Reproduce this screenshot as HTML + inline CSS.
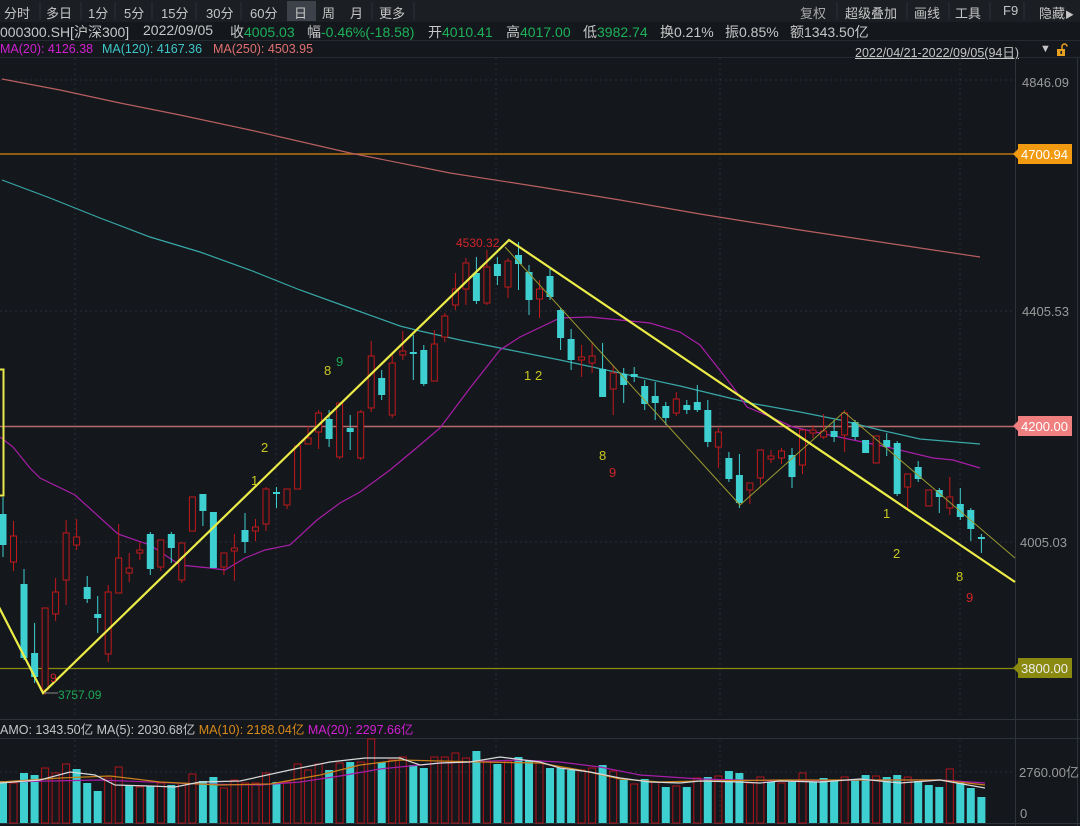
<!DOCTYPE html>
<html><head><meta charset="utf-8"><style>
html,body{margin:0;padding:0;background:#14171c;width:1080px;height:826px;overflow:hidden;font-family:"Liberation Sans","Noto Sans CJK SC",sans-serif;}
.t{position:absolute;white-space:nowrap;}
</style></head><body>
<div style="position:absolute;left:0;top:0;width:1080px;height:22px;background:#1b1e23;"></div>
<div style="position:absolute;left:287px;top:1px;width:29px;height:20px;background:#3d4149;"></div>
<div style="font-size:13px;color:#c6c6c6;">
<span class="t" style="left:4px;top:3px">分时</span>
<span class="t" style="left:46px;top:3px">多日</span>
<span class="t" style="left:88px;top:3px">1分</span>
<span class="t" style="left:124px;top:3px">5分</span>
<span class="t" style="left:161px;top:3px">15分</span>
<span class="t" style="left:206px;top:3px">30分</span>
<span class="t" style="left:250px;top:3px">60分</span>
<span class="t" style="left:294px;top:3px">日</span>
<span class="t" style="left:322px;top:3px">周</span>
<span class="t" style="left:350px;top:3px">月</span>
<span class="t" style="left:379px;top:3px">更多</span>
<span class="t" style="left:800px;top:3px;color:#a8a8a8">复权</span>
<span class="t" style="left:845px;top:3px">超级叠加</span>
<span class="t" style="left:914px;top:3px">画线</span>
<span class="t" style="left:955px;top:3px">工具</span>
<span class="t" style="left:1003px;top:3px">F9</span>
<span class="t" style="left:1039px;top:3px">隐藏<span style="font-size:9px">▶</span></span>
</div>
<svg style="position:absolute;left:0;top:0" width="1080" height="22">
<g stroke="#2c3038" stroke-width="1">
<path d="M40 2V20M81 2V20M115 2V20M152 2V20M196 2V20M241 2V20M372 2V20M414 2V20M837 2V20M907 2V20M949 2V20M990 2V20M1024 2V20"/>
</g></svg>
<div style="position:absolute;left:0;top:40px;width:1080px;height:1px;background:#262a31"></div>
<div style="position:absolute;left:0;top:57px;width:1080px;height:1px;background:#262a31"></div>
<div style="font-size:14px;color:#c6c6c6;">
<span class="t" style="left:0px;top:22px">000300.SH[沪深300]</span>
<span class="t" style="left:143px;top:22px">2022/09/05</span>
<span class="t" style="left:230px;top:22px">收<span style="color:#1db15a">4005.03</span></span>
<span class="t" style="left:307px;top:22px">幅<span style="color:#1db15a">-0.46%(-18.58)</span></span>
<span class="t" style="left:428px;top:22px">开<span style="color:#1db15a">4010.41</span></span>
<span class="t" style="left:506px;top:22px">高<span style="color:#1db15a">4017.00</span></span>
<span class="t" style="left:583px;top:22px">低<span style="color:#1db15a">3982.74</span></span>
<span class="t" style="left:660px;top:22px">换0.21%</span>
<span class="t" style="left:725px;top:22px">振0.85%</span>
<span class="t" style="left:790px;top:22px">额1343.50亿</span>
</div>
<div style="font-size:12.5px;">
<span class="t" style="left:0px;top:42px;color:#d020d0">MA(20): 4126.38</span>
<span class="t" style="left:102px;top:42px;color:#3ec8c8">MA(120): 4167.36</span>
<span class="t" style="left:213px;top:42px;color:#e07070">MA(250): 4503.95</span>
<span class="t" style="left:855px;top:42px;color:#c6c6c6;text-decoration:underline;font-size:12.5px">2022/04/21-2022/09/05(94日)</span>
<span class="t" style="left:1040px;top:43px;color:#c6c6c6;font-size:11px">▼</span>
</div>
<svg style="position:absolute;left:1056px;top:43px" width="14" height="14"><path d="M6 6V3.5a2.5 2.5 0 0 1 5 0" fill="none" stroke="#e8a020" stroke-width="1.5"/><rect x="1" y="6" width="8" height="7" fill="#e8a020"/><rect x="4.5" y="8" width="1.5" height="3" fill="#14171c"/></svg>

<svg style="position:absolute;left:0;top:0" width="1080" height="826">
<g stroke="#2a2e35" stroke-width="1" stroke-dasharray="2,3">
<path d="M0 80H1015M0 311H1015M0 542H1015M75 58V718M276 58V718M496 58V718M720 58V718M960 58V718M0 772H1015M75 740V822M276 740V822M496 740V822M720 740V822M960 740V822"/>
</g>
<path d="M1015.5 58V826M1077.5 58V826" stroke="#2e3239"/>
<path d="M0 719.5H1080M0 738.5H1080M0 823.5H1080" stroke="#2e3239"/>
<path d="M0 154H1015" stroke="#b8730f" stroke-width="1.5"/>
<path d="M0 426.5H1015" stroke="#b86a6a" stroke-width="1.5"/>
<path d="M0 668.5H1015" stroke="#8a8a10" stroke-width="1.2"/>
<polyline fill="none" stroke="#b86060" stroke-width="1.2" points="2,79 60,90 120,103 180,115 250,130 350,153 450,173 540,187 620,200 700,214 800,230 900,245 980,257"/>
<polyline fill="none" stroke="#38a8a8" stroke-width="1.2" points="2,180 50,198 100,218 150,237 200,252 250,270 300,290 350,308 400,326 420,331 460,340 500,348 560,360 620,373 680,386 750,403 800,412 840,420 880,430 920,439 980,444"/>
<polyline fill="none" stroke="#a81ea8" stroke-width="1.2" points="0,437 13,447 30,468 40,478 75,495 118,534 150,545 180,565 210,568 225,570 245,558 265,550 290,545 317,520 340,503 360,492 390,470 420,445 440,428 470,388 500,350 520,337 560,318 590,317 620,320 650,323 680,332 700,345 733,387 747,407 773,418 793,427 820,433 853,440 887,447 933,458 953,460 980,468"/>
<path d="M-5 369.5H3.5V495.5H-5" fill="none" stroke="#e8e84a" stroke-width="2"/>
<path stroke="#c0191c" stroke-width="1" fill="none" d="M13.5 521V571M45.1 608V695M55.6 578V621M66.1 520V605M76.6 519V550M108.2 585V662M118.7 524V593M129.2 553V582M139.8 542V560M160.8 540V571M181.8 543V583M192.4 497V531M223.9 553V575M234.4 534V581M255.5 519V541M266 487V531M287 489V509M297.6 446V489M308.1 426V444M318.6 410V449M339.6 403V459M360.7 410V460M371.2 341V412M392.2 355V418M402.8 331V360M434.3 330V381M444.8 313V342M455.4 273V310M465.9 258V305M486.9 250V305M508 258V298M539.5 280V318M581.6 345V377M592.1 342V373M613.2 365V415M676.3 392V416M718.4 428V468M749.9 483V504M760.4 450V485M771 450V463M781.5 448V464M802.5 430V474M813 425V438M823.6 414V439M844.6 410V452M876.2 436V463M907.7 474V508M928.8 490V506M949.8 477V515"/>
<g fill="#14171c" stroke="#c0191c" stroke-width="1">
<rect x="10.5" y="536" width="6" height="26"/><rect x="42.1" y="608" width="6" height="82"/><rect x="52.6" y="592" width="6" height="22"/><rect x="63.1" y="533" width="6" height="47"/><rect x="73.6" y="537" width="6" height="8"/><rect x="105.2" y="592" width="6" height="62"/><rect x="115.7" y="558" width="6" height="35"/><rect x="126.2" y="568" width="6" height="5"/><rect x="136.8" y="550" width="6" height="3"/><rect x="157.8" y="540" width="6" height="27"/><rect x="178.8" y="543" width="6" height="37"/><rect x="189.4" y="497" width="6" height="34"/><rect x="220.9" y="553" width="6" height="14"/><rect x="231.4" y="548" width="6" height="3"/><rect x="252.5" y="527" width="6" height="4"/><rect x="263" y="489" width="6" height="35"/><rect x="284" y="489" width="6" height="16"/><rect x="294.6" y="446" width="6" height="43"/><rect x="305.1" y="438" width="6" height="6"/><rect x="315.6" y="413" width="6" height="19"/><rect x="336.6" y="403" width="6" height="54"/><rect x="357.7" y="412" width="6" height="46"/><rect x="368.2" y="356" width="6" height="52"/><rect x="389.2" y="363" width="6" height="52"/><rect x="399.8" y="351" width="6" height="4"/><rect x="431.3" y="344" width="6" height="37"/><rect x="441.8" y="316" width="6" height="21"/><rect x="452.4" y="289" width="6" height="16"/><rect x="462.9" y="263" width="6" height="26"/><rect x="483.9" y="267" width="6" height="36"/><rect x="505" y="261" width="6" height="26"/><rect x="536.5" y="289" width="6" height="10"/><rect x="578.6" y="357" width="6" height="3"/><rect x="589.1" y="356" width="6" height="7"/><rect x="610.2" y="373" width="6" height="16"/><rect x="673.3" y="399" width="6" height="14"/><rect x="715.4" y="432" width="6" height="15"/><rect x="746.9" y="483" width="6" height="7"/><rect x="757.4" y="450" width="6" height="28"/><rect x="768" y="456" width="6" height="3"/><rect x="778.5" y="451" width="6" height="7"/><rect x="799.5" y="430" width="6" height="35"/><rect x="810" y="430" width="6" height="3"/><rect x="820.6" y="431" width="6" height="6"/><rect x="841.6" y="413" width="6" height="22"/><rect x="873.2" y="436" width="6" height="27"/><rect x="904.7" y="474" width="6" height="13"/><rect x="925.8" y="490" width="6" height="16"/><rect x="946.8" y="497" width="6" height="11"/>
</g>
<path stroke="#3ecfd0" stroke-width="1" fill="none" d="M3 497V557M24 569V660M34.6 623V683M87.2 576V603M97.7 596V633M150.3 532V575M171.3 532V563M202.9 494V526M213.4 512V568M245 513V553M276.5 487V508M329.1 410V447M350.2 415V450M381.7 370V400M413.3 335V380M423.8 345V386M476.4 257V304M497.4 257V285M518.5 242V290M529 265V315M550 268V300M560.6 308V350M571.1 329V370M602.6 343V397M623.7 368V403M634.2 367V382M644.7 380V410M655.2 382V420M665.8 402V425M686.8 400V414M697.3 385V412M707.8 400V447M728.9 452V482M739.4 454V508M792 448V488M834.1 420V442M855.1 420V440M865.6 440V453M886.7 433V456M897.2 441V496M918.2 461V482M939.3 488V513M960.3 488V520M970.8 508V541M981.4 534V553"/>
<g fill="#3ecfd0">
<rect x="-0.5" y="514" width="7" height="31"/><rect x="20.5" y="584" width="7" height="74"/><rect x="31.1" y="653" width="7" height="24"/><rect x="83.7" y="587" width="7" height="12"/><rect x="94.2" y="614" width="7" height="4"/><rect x="146.8" y="534" width="7" height="35"/><rect x="167.8" y="534" width="7" height="14"/><rect x="199.4" y="494" width="7" height="17"/><rect x="209.9" y="512" width="7" height="56"/><rect x="241.5" y="530" width="7" height="12"/><rect x="273" y="492" width="7" height="2"/><rect x="325.6" y="419" width="7" height="20"/><rect x="346.7" y="428" width="7" height="4"/><rect x="378.2" y="378" width="7" height="17"/><rect x="409.8" y="352" width="7" height="2"/><rect x="420.3" y="350" width="7" height="34"/><rect x="472.9" y="273" width="7" height="28"/><rect x="493.9" y="264" width="7" height="12"/><rect x="515" y="255" width="7" height="9"/><rect x="525.5" y="272" width="7" height="28"/><rect x="546.5" y="276" width="7" height="21"/><rect x="557.1" y="310" width="7" height="28"/><rect x="567.6" y="339" width="7" height="21"/><rect x="599.1" y="369" width="7" height="28"/><rect x="620.2" y="374" width="7" height="11"/><rect x="630.7" y="374" width="7" height="3"/><rect x="641.2" y="386" width="7" height="18"/><rect x="651.7" y="396" width="7" height="7"/><rect x="662.3" y="406" width="7" height="12"/><rect x="683.3" y="405" width="7" height="5"/><rect x="693.8" y="402" width="7" height="8"/><rect x="704.3" y="410" width="7" height="32"/><rect x="725.4" y="458" width="7" height="21"/><rect x="735.9" y="475" width="7" height="28"/><rect x="788.5" y="455" width="7" height="22"/><rect x="830.6" y="431" width="7" height="6"/><rect x="851.6" y="422" width="7" height="15"/><rect x="862.1" y="440" width="7" height="13"/><rect x="883.2" y="440" width="7" height="7"/><rect x="893.7" y="443" width="7" height="51"/><rect x="914.7" y="467" width="7" height="12"/><rect x="935.8" y="490" width="7" height="7"/><rect x="956.8" y="504" width="7" height="13"/><rect x="967.3" y="510" width="7" height="19"/><rect x="977.9" y="537" width="7" height="2"/>
</g>
<polyline fill="none" stroke="#9a9a30" stroke-width="1" points="505,247 740,505 844,412 1015,558"/>
<polyline fill="none" stroke="#ecec48" stroke-width="2.2" points="-20,570 43,693 509,240 1015,582"/>
<path d="M44 693H58" stroke="#888" stroke-width="1"/>
<g fill="#3ecfd0">
<rect x="-1" y="781" width="8" height="42"/><rect x="20" y="773" width="8" height="50"/><rect x="30.6" y="775" width="8" height="48"/><rect x="72.6" y="769" width="8" height="54"/><rect x="83.2" y="783" width="8" height="40"/><rect x="93.7" y="791" width="8" height="32"/><rect x="125.2" y="785" width="8" height="38"/><rect x="146.3" y="786" width="8" height="37"/><rect x="167.3" y="785" width="8" height="38"/><rect x="198.9" y="781" width="8" height="42"/><rect x="209.4" y="777" width="8" height="46"/><rect x="272.5" y="782" width="8" height="41"/><rect x="325.1" y="770" width="8" height="53"/><rect x="346.2" y="762" width="8" height="61"/><rect x="377.7" y="762" width="8" height="61"/><rect x="409.3" y="765" width="8" height="58"/><rect x="419.8" y="768" width="8" height="55"/><rect x="472.4" y="751" width="8" height="72"/><rect x="493.4" y="764" width="8" height="59"/><rect x="514.5" y="757" width="8" height="66"/><rect x="525" y="760" width="8" height="63"/><rect x="546" y="768" width="8" height="55"/><rect x="556.6" y="768" width="8" height="55"/><rect x="567.1" y="770" width="8" height="53"/><rect x="598.6" y="765" width="8" height="58"/><rect x="619.7" y="780" width="8" height="43"/><rect x="640.7" y="779" width="8" height="44"/><rect x="661.8" y="787" width="8" height="36"/><rect x="682.8" y="787" width="8" height="36"/><rect x="703.8" y="777" width="8" height="46"/><rect x="724.9" y="771" width="8" height="52"/><rect x="735.4" y="773" width="8" height="50"/><rect x="767" y="782" width="8" height="41"/><rect x="788" y="782" width="8" height="41"/><rect x="809" y="782" width="8" height="41"/><rect x="819.6" y="778" width="8" height="45"/><rect x="830.1" y="780" width="8" height="43"/><rect x="851.1" y="780" width="8" height="43"/><rect x="861.6" y="775" width="8" height="48"/><rect x="882.7" y="777" width="8" height="46"/><rect x="893.2" y="775" width="8" height="48"/><rect x="914.2" y="781" width="8" height="42"/><rect x="924.8" y="785" width="8" height="38"/><rect x="935.3" y="787" width="8" height="36"/><rect x="956.3" y="783" width="8" height="40"/><rect x="966.8" y="788" width="8" height="35"/><rect x="977.4" y="797" width="8" height="26"/>
</g>
<g fill="none" stroke="#b0141a" stroke-width="1">
<rect x="10" y="783" width="7" height="40"/><rect x="41.6" y="768" width="7" height="55"/><rect x="52.1" y="773" width="7" height="50"/><rect x="62.6" y="764" width="7" height="59"/><rect x="104.7" y="778" width="7" height="45"/><rect x="115.2" y="767" width="7" height="56"/><rect x="136.3" y="787" width="7" height="36"/><rect x="157.3" y="783" width="7" height="40"/><rect x="178.3" y="783" width="7" height="40"/><rect x="188.9" y="774" width="7" height="49"/><rect x="220.4" y="788" width="7" height="35"/><rect x="230.9" y="780" width="7" height="43"/><rect x="241.5" y="783" width="7" height="40"/><rect x="252" y="783" width="7" height="40"/><rect x="262.5" y="773" width="7" height="50"/><rect x="283.5" y="782" width="7" height="41"/><rect x="294.1" y="764" width="7" height="59"/><rect x="304.6" y="770" width="7" height="53"/><rect x="315.1" y="764" width="7" height="59"/><rect x="336.1" y="763" width="7" height="60"/><rect x="357.2" y="762" width="7" height="61"/><rect x="367.7" y="739" width="7" height="84"/><rect x="388.7" y="760" width="7" height="63"/><rect x="399.3" y="757" width="7" height="66"/><rect x="430.8" y="757" width="7" height="66"/><rect x="441.3" y="757" width="7" height="66"/><rect x="451.9" y="753" width="7" height="70"/><rect x="462.4" y="758" width="7" height="65"/><rect x="483.4" y="761" width="7" height="62"/><rect x="504.5" y="761" width="7" height="62"/><rect x="536" y="763" width="7" height="60"/><rect x="578.1" y="770" width="7" height="53"/><rect x="588.6" y="768" width="7" height="55"/><rect x="609.7" y="771" width="7" height="52"/><rect x="630.7" y="784" width="7" height="39"/><rect x="651.7" y="782" width="7" height="41"/><rect x="672.8" y="786" width="7" height="37"/><rect x="693.8" y="778" width="7" height="45"/><rect x="714.9" y="776" width="7" height="47"/><rect x="746.4" y="783" width="7" height="40"/><rect x="756.9" y="777" width="7" height="46"/><rect x="778" y="783" width="7" height="40"/><rect x="799" y="773" width="7" height="50"/><rect x="841.1" y="777" width="7" height="46"/><rect x="872.7" y="776" width="7" height="47"/><rect x="904.2" y="777" width="7" height="46"/><rect x="946.3" y="769" width="7" height="54"/>
</g>
<polyline fill="none" stroke="#a81ea8" stroke-width="1.2" points="0,782 100,780 200,784 260,785 300,782 340,776 380,769 440,763 520,760 560,762 600,767 640,775 700,779 780,781 860,780 940,780 985,783"/>
<polyline fill="none" stroke="#c8801a" stroke-width="1.2" points="0,782 60,778 110,776 160,782 220,785 270,784 320,775 360,765 400,760 480,762 540,763 580,770 620,779 660,782 700,781 780,780 860,780 940,780 985,785"/>
<polyline fill="none" stroke="#d8d8d8" stroke-width="1.2" points="0,783 40,780 70,772 95,775 115,785 150,786 175,787 200,782 240,781 290,770 330,762 365,758 400,758 420,765 440,763 470,762 500,757 540,762 560,768 590,772 620,778 650,782 680,783 700,781 740,782 760,783 780,781 820,782 860,779 900,783 940,780 985,788"/>
<path d="M1013 154L1019 148V160Z" fill="#f29a10"/><rect x="1018" y="144" width="54" height="20" fill="#f29a10"/>
<path d="M1013 426L1019 420V432Z" fill="#f08080"/><rect x="1018" y="416" width="54" height="20" fill="#f08080"/>
<path d="M1013 668L1019 662V674Z" fill="#8a8a10"/><rect x="1018" y="658" width="54" height="20" fill="#8a8a10"/>
<g font-family="Liberation Sans, sans-serif" font-size="13">
<text x="1021" y="159" fill="#fff">4700.94</text>
<text x="1021" y="431" fill="#fff">4200.00</text>
<text x="1021" y="673" fill="#eee">3800.00</text>
<text x="1022" y="87" fill="#9a9a9a">4846.09</text>
<text x="1022" y="316" fill="#9a9a9a">4405.53</text>
<text x="1020" y="547" fill="#9a9a9a">4005.03</text>
<text x="1019" y="777" fill="#9a9a9a">2760.00亿</text>
<text x="1020" y="818" fill="#9a9a9a">0</text>
<text x="456" y="247" fill="#d0242a" font-size="12">4530.32</text>
<text x="58" y="699" fill="#1fa856" font-size="12">3757.09</text>
<text x="50" y="682" fill="#d0242a" font-size="12">9</text>
<text x="324" y="375" fill="#c8c820">8</text><text x="336" y="366" fill="#1fa856">9</text>
<text x="261" y="452" fill="#c8c820">2</text><text x="251" y="485" fill="#c8c820">1</text>
<text x="524" y="380" fill="#c8c820">1</text><text x="535" y="380" fill="#c8c820">2</text>
<text x="599" y="460" fill="#c8c820">8</text><text x="609" y="477" fill="#d0242a">9</text>
<text x="883" y="518" fill="#c8c820">1</text><text x="893" y="558" fill="#c8c820">2</text>
<text x="956" y="581" fill="#c8c820">8</text><text x="966" y="602" fill="#d0242a">9</text>
<text x="0" y="734" font-size="12.5" fill="#c6c6c6">AMO: 1343.50亿 MA(5): 2030.68亿 <tspan fill="#d88a1a">MA(10): 2188.04亿</tspan> <tspan fill="#d020d0">MA(20): 2297.66亿</tspan></text>
</g>
</svg>
</body></html>
